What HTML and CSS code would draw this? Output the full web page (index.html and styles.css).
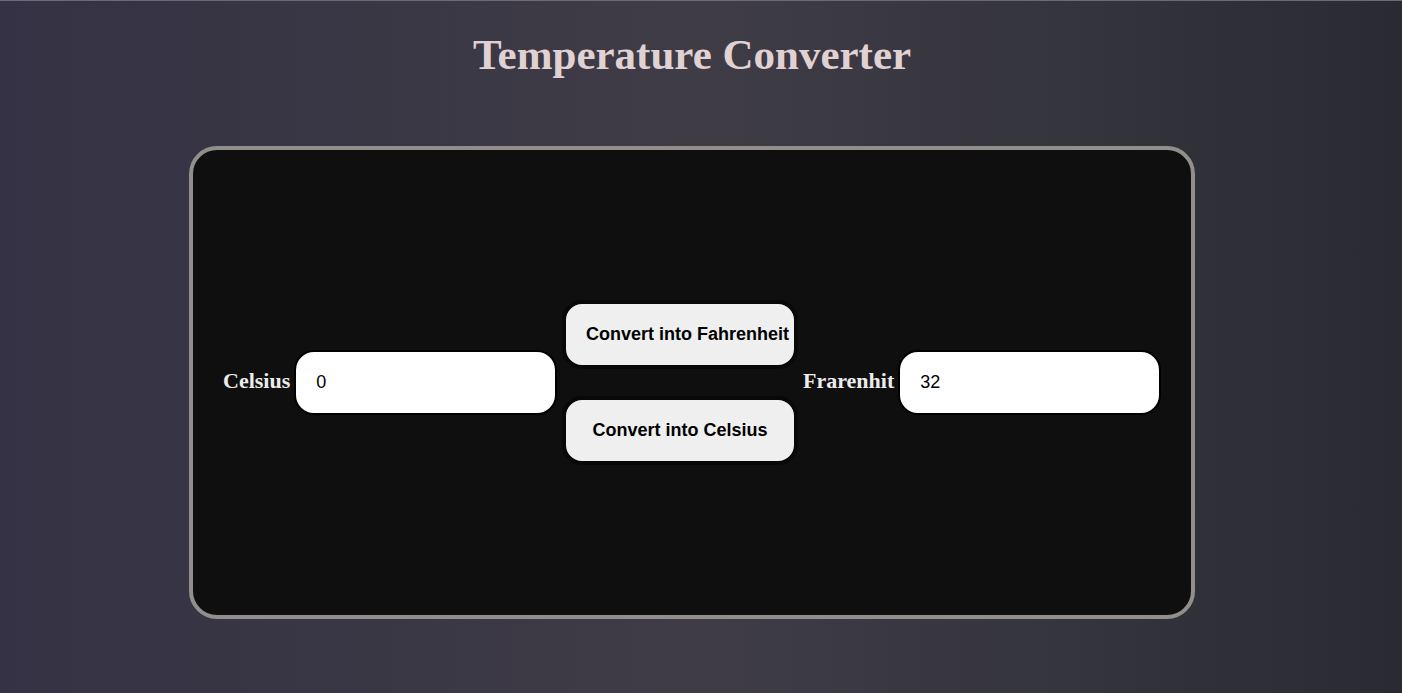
FILE: index.html
```html
<!DOCTYPE html>
<html lang="en">
<head>
<meta charset="utf-8">
<title>Temperature Converter</title>
<link rel="stylesheet" href="styles.css">
</head>
<body>
<h1 class="title">Temperature Converter</h1>
<main class="card">
  <div class="field">
    <label class="label" for="celsius">Celsius</label>
    <input class="input" id="celsius" type="text" value="0">
  </div>
  <div class="actions">
    <button class="button" type="button">Convert into Fahrenheit</button>
    <button class="button" type="button">Convert into Celsius</button>
  </div>
  <div class="field">
    <label class="label" for="fahrenheit">Frarenhit</label>
    <input class="input" id="fahrenheit" type="text" value="32">
  </div>
</main>
</body>
</html>
```
FILE: styles.css
```css
* {
  box-sizing: border-box;
}

body {
  display: flex;
  flex-direction: column;
  align-items: center;
  gap: 66px;
  min-height: 100vh;
  margin: 0;
  padding: 28px 18px 74px 0;
  border-top: 1px solid #696b76;
  background: linear-gradient(to right, #343244, #3f3c46 50%, #35353e 75%, #2a2a33);
  font-family: "Liberation Serif", "Times New Roman", serif;
}

.title {
  margin: 0;
  color: #e0d2d2;
  font-size: 43px;
  line-height: 51px;
}

.card {
  display: flex;
  flex: 1;
  align-items: center;
  justify-content: center;
  gap: 5px;
  max-width: 1006px;
  width: 100%;
  padding: 30px;
  border: 4px solid #918e8c;
  border-radius: 28px;
  background: #0f0f0f;
}

.field {
  display: flex;
  flex: 0 1 auto;
  align-items: baseline;
  gap: 4px;
  min-width: 0;
}

.label {
  color: #ececec;
  font-size: 22px;
  font-weight: bold;
}

.input {
  width: 263px;
  min-width: 0;
  padding: 20px;
  border: 2px solid #000;
  border-radius: 20px;
  background: #fff;
  color: #000;
  font: 18px/21px "Liberation Sans", Arial, sans-serif;
}

.actions {
  display: flex;
  flex: none;
  flex-direction: column;
  gap: 27px;
}

.button {
  width: 236px;
  padding: 20px;
  border: 4px solid #080808;
  border-radius: 20px;
  background: #efefef;
  color: #000;
  font: bold 18px/21px "Liberation Sans", Arial, sans-serif;
  white-space: nowrap;
}
```
